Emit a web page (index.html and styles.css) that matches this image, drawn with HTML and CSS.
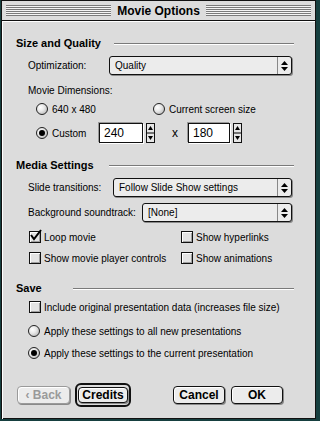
FILE: index.html
```html
<!DOCTYPE html>
<html lang="en">
  <head>
    <meta charset="UTF-8" />
    <title>Movie Options</title>
    <link rel="stylesheet" href="styles.css">
  </head>
  <body>
    <div class="window">
      <div class="titlebar">
        <span class="stripes"></span>
        <span class="title">Movie Options</span>
        <span class="stripes"></span>
      </div>

      <div class="content">
        <div class="heading"><span>Size and Quality</span><span class="rule"></span></div>

        <div class="row field">
          <span class="label">Optimization:</span>
          <div class="popup popup-opt"><span>Quality</span><span class="arrows"><svg width="7" height="10" viewBox="0 0 7 10"><path d="M3.5 0 L7 4 H0 Z M3.5 10 L7 6 H0 Z" fill="#000"/></svg></span></div>
        </div>

        <div class="row sub">Movie Dimensions:</div>

        <div class="row dims">
          <label class="opt col-a"><span class="radio"></span>640 x 480</label>
          <label class="opt"><span class="radio"></span>Current screen size</label>
        </div>

        <div class="row dims custom">
          <label class="opt col-c"><span class="radio on"></span>Custom</label>
          <span class="num w44">240</span>
          <span class="spin"><svg width="9" height="20" viewBox="0 0 9 20"><path d="M4.5 3 L7 7 H2 Z M4.5 17 L7 13 H2 Z" fill="#000"/><path d="M0 10 H9" stroke="#000"/></svg></span>
          <span class="times">x</span>
          <span class="num w42">180</span>
          <span class="spin"><svg width="9" height="20" viewBox="0 0 9 20"><path d="M4.5 3 L7 7 H2 Z M4.5 17 L7 13 H2 Z" fill="#000"/><path d="M0 10 H9" stroke="#000"/></svg></span>
        </div>

        <div class="heading media"><span>Media Settings</span><span class="rule"></span></div>

        <div class="row field">
          <span class="label">Slide transitions:</span>
          <div class="popup popup-slide"><span>Follow Slide Show settings</span><span class="arrows"><svg width="7" height="10" viewBox="0 0 7 10"><path d="M3.5 0 L7 4 H0 Z M3.5 10 L7 6 H0 Z" fill="#000"/></svg></span></div>
        </div>

        <div class="row field">
          <span class="label">Background soundtrack:</span>
          <div class="popup popup-bg"><span>[None]</span><span class="arrows"><svg width="7" height="10" viewBox="0 0 7 10"><path d="M3.5 0 L7 4 H0 Z M3.5 10 L7 6 H0 Z" fill="#000"/></svg></span></div>
        </div>

        <div class="row checks first">
          <label class="opt col-b"><span class="box on"><svg width="14" height="14" viewBox="0 0 14 14"><path d="M2 6 L5 10 L12 1" stroke="#000" stroke-width="2" fill="none"/></svg></span>Loop movie</label>
          <label class="opt"><span class="box"></span>Show hyperlinks</label>
        </div>

        <div class="row checks">
          <label class="opt col-b"><span class="box"></span>Show movie player controls</label>
          <label class="opt"><span class="box"></span>Show animations</label>
        </div>

        <div class="heading save"><span>Save</span><span class="rule"></span></div>

        <div class="row checks include">
          <label class="opt"><span class="box"></span>Include original presentation data (increases file size)</label>
        </div>

        <div class="row apply first">
          <label class="opt"><span class="radio"></span>Apply these settings to all new presentations</label>
        </div>
        <div class="row apply">
          <label class="opt"><span class="radio on"></span>Apply these settings to the current presentation</label>
        </div>

        <div class="buttons">
          <button class="btn back" disabled>&lsaquo; Back</button>
          <span class="default-ring"><button class="btn credits">Credits</button></span>
          <span class="spacer"></span>
          <button class="btn cancel">Cancel</button>
          <button class="btn ok">OK</button>
        </div>
      </div>
    </div>
  </body>
</html>
```

FILE: styles.css
```css
body {
  margin: 0;
  background-color: #163f3f;
  font-family: "Liberation Sans", Arial, sans-serif;
  font-size: 10px;
  color: #000;
  white-space: nowrap;
}

.window {
  width: 313px;
  height: 417px;
  margin-left: 1px;
  background-color: #dcdcdc;
  border: 1px solid #111;
}

.titlebar {
  display: flex;
  align-items: center;
  height: 19px;
  padding: 0 4px;
  border-bottom: 1px solid #111;
  background-color: #dcdcdc;
}

.stripes {
  flex: 1;
  height: 11px;
  background: repeating-linear-gradient(to bottom, #7a7a7a 0 1px, #f4f4f4 1px 2px);
}

.title {
  padding: 0 6px;
  font-weight: bold;
  font-size: 12px;
}

.content {
  height: 396px;
  padding: 15px 21px 0 14px;
  box-shadow: inset 1px 1px 0 #fff;
}

.heading {
  display: flex;
  align-items: center;
  height: 14px;
  font-size: 11px;
  font-weight: bold;
}

.heading .rule {
  flex: 1;
  height: 1px;
  margin-left: 13px;
  background-color: #7a7a7a;
  box-shadow: 0 1px 0 #fff;
}

.heading.media {
  margin-top: 15px;
}

.heading.media .rule {
  margin-left: 15px;
}

.heading.save {
  margin-top: 16px;
}

.heading.save .rule {
  margin-left: 31px;
}

.row {
  display: flex;
  align-items: center;
  height: 14px;
  padding-left: 12px;
}

.label {
  flex-shrink: 0;
}

.field {
  height: 19px;
  margin-top: 6px;
  padding-right: 2px;
}

.sub {
  margin-top: 8px;
}

.popup {
  display: flex;
  align-items: center;
  flex-shrink: 0;
  height: 17px;
  margin-left: auto;
  background-color: #ececec;
  border: 1px solid #111;
  border-radius: 3px;
  box-shadow: 1px 1px 0 #8a8a8a;
}

.popup > span:first-child {
  flex: 1;
  padding-left: 5px;
}

.popup-opt {
  width: 181px;
}

.popup-slide {
  width: 177px;
}

.popup-bg {
  width: 148px;
}

.arrows {
  display: flex;
  align-items: center;
  justify-content: center;
  width: 13px;
  height: 17px;
  border-left: 1px solid #888;
}

.opt {
  display: flex;
  align-items: center;
  flex-shrink: 0;
}

.radio {
  flex-shrink: 0;
  width: 10px;
  height: 10px;
  margin-right: 4px;
  border: 1px solid #222;
  border-radius: 50%;
  background: radial-gradient(circle at 35% 35%, #fff 0, #e8e8e8 40%, #a8a8a8 100%);
  position: relative;
}

.radio.on::after {
  content: "";
  position: absolute;
  left: 2px;
  top: 2px;
  width: 6px;
  height: 6px;
  border-radius: 50%;
  background-color: #000;
}

.box {
  flex-shrink: 0;
  width: 10px;
  height: 10px;
  margin-right: 3px;
  border: 1px solid #111;
  background-color: #e4e4e4;
  box-shadow: inset 1px 1px 0 #fff, inset -1px -1px 0 #a0a0a0;
  position: relative;
}

.box svg {
  position: absolute;
  left: -1px;
  top: -3px;
}

.dims {
  padding-left: 20px;
  margin-top: 5px;
}

.col-a {
  width: 117px;
}

.custom {
  height: 20px;
  margin-top: 7px;
}

.col-c {
  width: 63px;
}

.num {
  height: 18px;
  line-height: 18px;
  padding-left: 4px;
  box-sizing: border-box;
  background-color: #fff;
  border: 1px solid #111;
  box-shadow: -1px -1px 0 #999, 1px 1px 0 #fff;
  font-size: 12px;
}

.w44 {
  width: 44px;
  height: 20px;
}

.w42 {
  width: 42px;
  height: 20px;
}

.spin {
  display: flex;
  margin-left: 3px;
  width: 9px;
  height: 20px;
  box-sizing: border-box;
  border: 1px solid #111;
  background-color: #e6e6e6;
  overflow: hidden;
}

.spin svg {
  margin: -1px;
}

.times {
  margin-left: 17px;
  margin-right: 10px;
  font-size: 12px;
}

.checks {
  margin-top: 7px;
  padding-left: 13px;
}

.checks.first {
  margin-top: 8px;
}

.col-b {
  width: 152px;
}

.checks.include {
  margin-top: 5px;
}

.apply {
  margin-top: 8px;
  padding-left: 12px;
}

.apply.first {
  margin-top: 10px;
}

.buttons {
  display: flex;
  align-items: center;
  height: 24px;
  margin-top: 23px;
  margin-left: 1px;
  margin-right: 11px;
}

.btn {
  height: 18px;
  padding: 0;
  font-family: "Liberation Sans", Arial, sans-serif;
  font-size: 12px;
  font-weight: bold;
  color: #000;
  background-color: #ececec;
  border: 1px solid #111;
  border-radius: 4px;
  box-shadow: inset 1px 1px 0 #fff, 1px 1px 0 #8a8a8a;
}

.back {
  width: 53px;
  color: #9a9a9a;
  border-color: #9a9a9a;
}

.default-ring {
  display: flex;
  align-items: center;
  justify-content: center;
  width: 52px;
  height: 20px;
  margin-left: 5px;
  border: 2px solid #111;
  border-radius: 6px;
}

.credits {
  width: 50px;
  height: 16px;
}

.spacer {
  flex: 1;
}

.cancel {
  width: 52px;
}

.ok {
  width: 52px;
  margin-left: 6px;
}
```
